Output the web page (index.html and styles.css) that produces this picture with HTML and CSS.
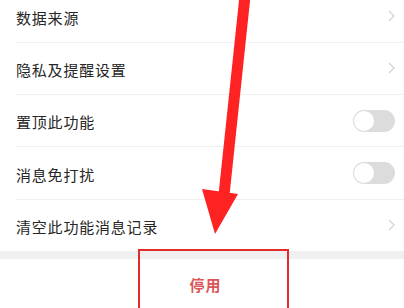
FILE: index.html
```html
<!DOCTYPE html>
<html>
<head>
    <meta charset="utf-8">
    <title>功能设置</title>
    <link rel="stylesheet" href="styles.css">
</head>
<body>
    <div class="page">
        <div class="settings">
            <div class="row">
                <span class="label">数据来源</span>
                <svg class="chevron" width="7" height="12" viewBox="0 0 7 12"><path d="M1 1 L6 6 L1 11" fill="none" stroke="#d4d4d4" stroke-width="1.3"/></svg>
            </div>
            <div class="row">
                <span class="label">隐私及提醒设置</span>
                <svg class="chevron" width="7" height="12" viewBox="0 0 7 12"><path d="M1 1 L6 6 L1 11" fill="none" stroke="#d4d4d4" stroke-width="1.3"/></svg>
            </div>
            <div class="row">
                <span class="label">置顶此功能</span>
                <div class="switch"><div class="knob"></div></div>
            </div>
            <div class="row">
                <span class="label">消息免打扰</span>
                <div class="switch"><div class="knob"></div></div>
            </div>
            <div class="row">
                <span class="label">清空此功能消息记录</span>
                <svg class="chevron" width="7" height="12" viewBox="0 0 7 12"><path d="M1 1 L6 6 L1 11" fill="none" stroke="#d4d4d4" stroke-width="1.3"/></svg>
            </div>
        </div>

        <div class="gap"></div>

        <div class="disable-btn">停用</div>

        <!-- annotation overlay -->
        <div class="mark-box"></div>
        <svg class="arrow" width="404" height="308" viewBox="0 0 404 308">
            <line x1="245" y1="-4" x2="224" y2="195" stroke="#ff2222" stroke-width="11"/>
            <polygon points="202,189 238,194 215,234" fill="#ff2222"/>
        </svg>
    </div>
</body>
</html>
```

FILE: styles.css
```css
body {
    margin: 0;
    font-family: "Noto Sans CJK SC", "Noto Sans", sans-serif;
    background: #fff;
}

.page {
    position: relative;
    width: 404px;
    height: 308px;
    overflow: hidden;
}

.settings {
    margin-top: -9.5px;
    padding-left: 16px;
}

.row {
    height: 51.3px;
    display: flex;
    align-items: center;
    justify-content: space-between;
    padding-right: 9px;
    border-bottom: 1px solid #efefef;
}

.row:last-child {
    border-bottom: none;
}

.label {
    font-size: 15px;
    color: #262626;
    letter-spacing: 0.8px;
    padding-top: 2px;
}

.switch {
    width: 42px;
    height: 22px;
    border-radius: 11px;
    background: #dcdcdc;
    position: relative;
}

.knob {
    position: absolute;
    left: 1px;
    top: 1px;
    width: 20px;
    height: 20px;
    border-radius: 50%;
    background: #fff;
}

.gap {
    height: 8px;
    background: #f0f0f0;
}

.disable-btn {
    height: 52px;
    display: flex;
    align-items: center;
    justify-content: center;
    padding-left: 7px;
    font-size: 15px;
    font-weight: bold;
    color: #d9575a;
    letter-spacing: 1px;
}

.mark-box {
    position: absolute;
    left: 138px;
    top: 249px;
    width: 147px;
    height: 80px;
    border: 2px solid #e42b2b;
}

.arrow {
    position: absolute;
    left: 0;
    top: 0;
}
```
